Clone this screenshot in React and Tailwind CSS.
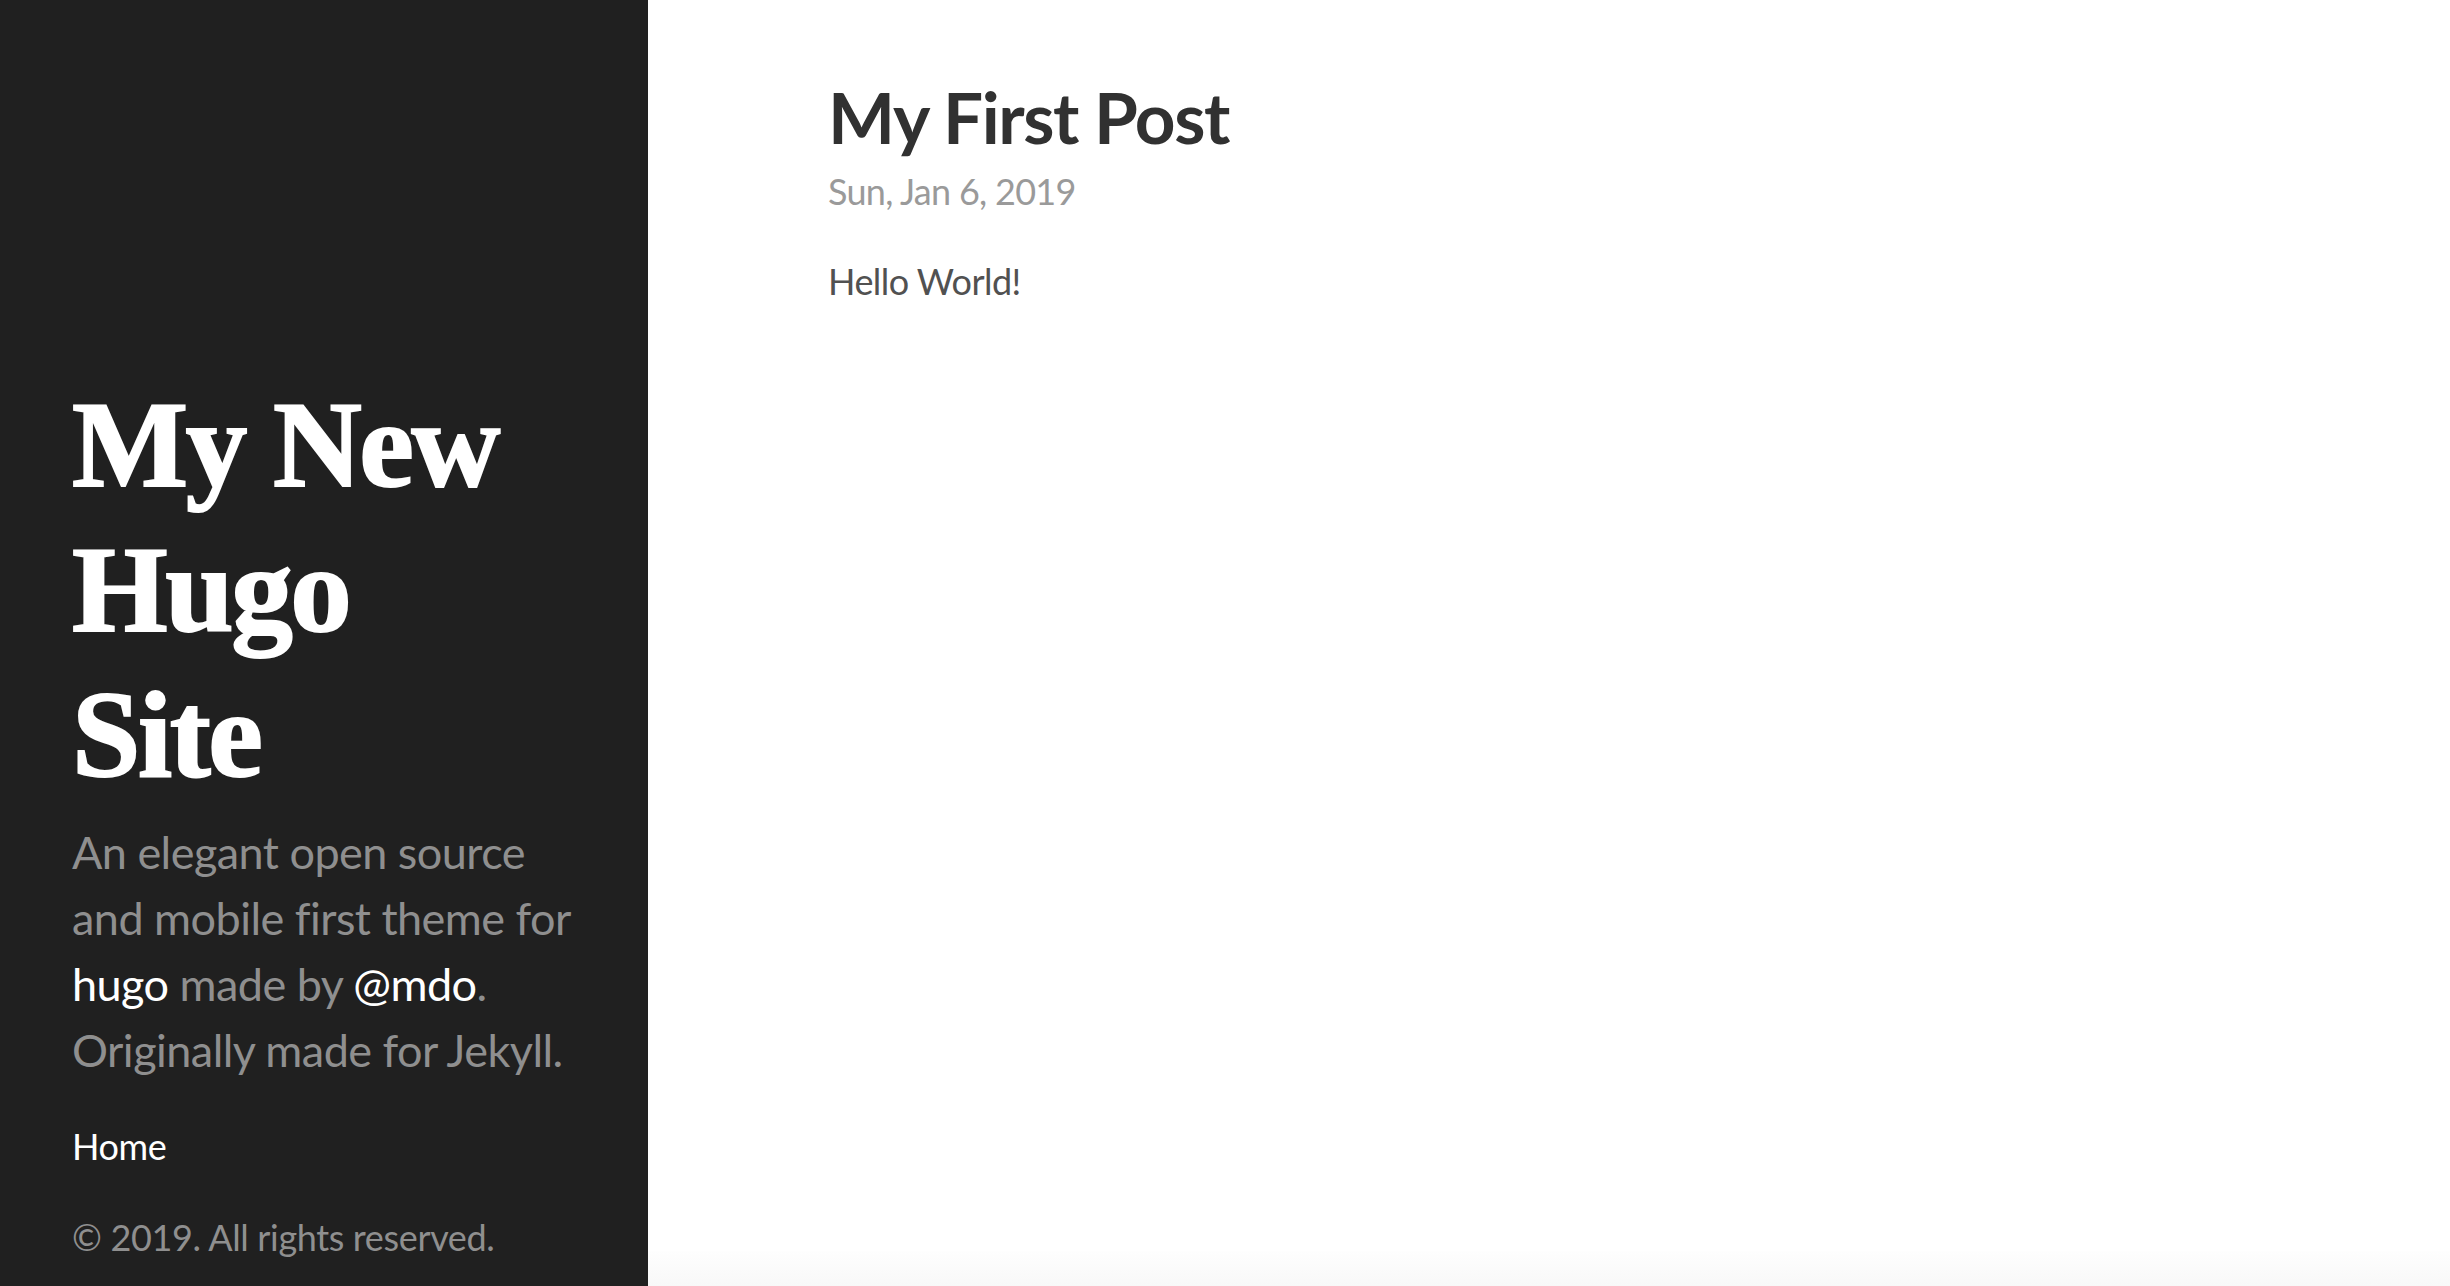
export default function App() {
  const sans = { fontFamily: "Lato, 'Noto Sans', sans-serif" };
  return (
    <div className="flex w-full h-[1286px] overflow-hidden bg-white" style={sans}>
      <aside className="w-[648px] shrink-0 h-full bg-[#202020] flex flex-col justify-end pl-[72px] pr-[40px] pb-[22px] text-[#8f8f8f]">
        <h1
          className="text-white font-bold text-[123px] leading-[145px] mb-[12px] tracking-[-0.02em] [-webkit-text-stroke:2px_#ffffff]"
          style={{ fontFamily: "'Liberation Serif', 'DejaVu Serif', serif" }}
        >
          My New
          <br />
          Hugo
          <br />
          Site
        </h1>
        <p className="text-[45px] leading-[66px] whitespace-nowrap mb-[32px] tracking-[-0.012em]">
          An elegant open source
          <br />
          and mobile first theme for
          <br />
          <a className="text-white">hugo</a> made by <a className="text-white">@mdo</a>.
          <br />
          Originally made for Jekyll.
        </p>
        <nav className="mb-[32px]">
          <a className="block text-white text-[36px] leading-[63px] tracking-[-0.01em]">Home</a>
        </nav>
        <p className="text-[36px] leading-[54px] tracking-[-0.01em]">© 2019. All rights reserved.</p>
      </aside>
      <main className="flex-1 h-full flex flex-col">
        <div className="flex-1 pl-[180px] pt-[72px]">
          <h1 className="text-[#313131] font-bold text-[71px] leading-[90px] mb-[2px] tracking-[-0.02em]">My First Post</h1>
          <div className="text-[#9a9a9a] text-[36px] leading-[54px] mb-[36px] tracking-[-0.02em]">Sun, Jan 6, 2019</div>
          <p className="text-[#515151] text-[36px] leading-[54px] tracking-[-0.015em]">Hello World!</p>
        </div>
        <div className="h-[35px] bg-gradient-to-b from-[#fefefe] to-[#f8f8f8]" />
      </main>
    </div>
  );
}
